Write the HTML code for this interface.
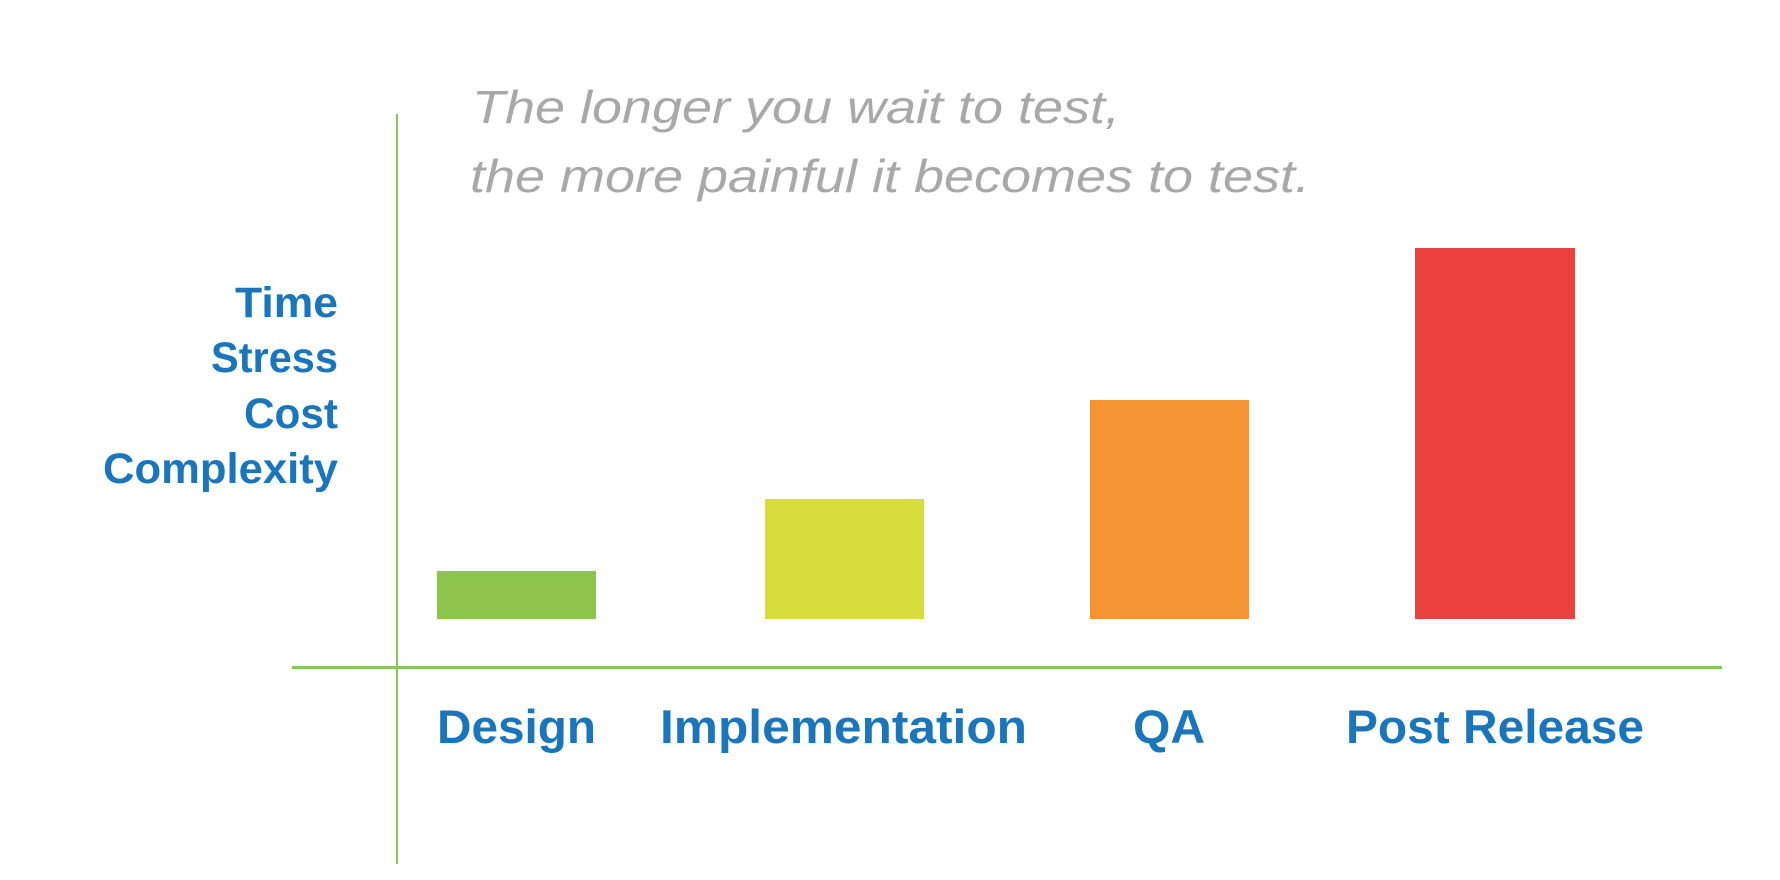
<!DOCTYPE html>
<html><head><meta charset="utf-8"><style>
html,body{margin:0;padding:0;background:#fff;}
svg{display:block;}
</style></head><body>
<svg width="1780" height="880" viewBox="0 0 1780 880" xmlns="http://www.w3.org/2000/svg">
<rect width="1780" height="880" fill="#fff"/>
<rect x="396" y="114" width="2" height="750" fill="#8dc452"/>
<rect x="292" y="666" width="1430" height="3" fill="#8dc452"/>
<rect x="437" y="571" width="159" height="48" fill="#8dc44b"/>
<rect x="765" y="499" width="159" height="120" fill="#d7de3c"/>
<rect x="1090" y="400" width="159" height="219" fill="#f39331"/>
<rect x="1415" y="248" width="160" height="371" fill="#ea403e"/>
<g font-family="Liberation Sans, sans-serif" font-style="italic" fill="#a8a8a8" font-size="46">
<text x="472" y="123" textLength="648" lengthAdjust="spacingAndGlyphs">The longer you wait to test,</text>
<text x="470" y="192" textLength="840" lengthAdjust="spacingAndGlyphs">the more painful it becomes to test.</text>
</g>
<g font-family="Liberation Sans, sans-serif" font-weight="bold" fill="#1b75bb" font-size="43">
<text x="235" y="317" textLength="103" lengthAdjust="spacingAndGlyphs">Time</text>
<text x="211" y="372" textLength="127" lengthAdjust="spacingAndGlyphs">Stress</text>
<text x="244" y="428" textLength="94" lengthAdjust="spacingAndGlyphs">Cost</text>
<text x="103" y="483" textLength="235" lengthAdjust="spacingAndGlyphs">Complexity</text>
</g>
<g font-family="Liberation Sans, sans-serif" font-weight="bold" fill="#1b75bb" font-size="47">
<text x="437" y="743" textLength="159" lengthAdjust="spacingAndGlyphs">Design</text>
<text x="660" y="743" textLength="367" lengthAdjust="spacingAndGlyphs">Implementation</text>
<text x="1133" y="743" textLength="72" lengthAdjust="spacingAndGlyphs">QA</text>
<text x="1346" y="743" textLength="298" lengthAdjust="spacingAndGlyphs">Post Release</text>
</g>
</svg>
</body></html>
